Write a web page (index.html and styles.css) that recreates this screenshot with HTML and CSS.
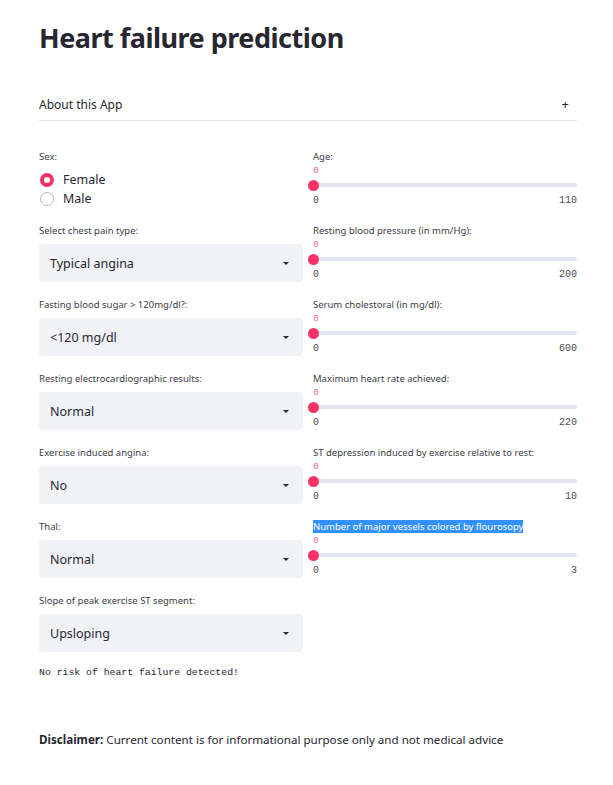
FILE: index.html
```html
<!DOCTYPE html>
<html>
<head>
<meta charset="utf-8">
<link rel="stylesheet" href="styles.css">
</head>
<body>
<div class="main">
  <h1 class="title">Heart failure prediction</h1>
  <div class="expander">
    <span class="exp-label">About this App</span>
    <span class="exp-plus">+</span>
  </div>
  <div class="columns">
    <div class="col">
      <div class="block radio-block">
        <div class="label">Sex:</div>
        <div class="radio-row"><span class="radio on"></span><span class="radio-text">Female</span></div>
        <div class="radio-row"><span class="radio"></span><span class="radio-text">Male</span></div>
      </div>
      <div class="block">
        <div class="label">Select chest pain type:</div>
        <div class="select"><span>Typical angina</span><span class="caret"></span></div>
      </div>
      <div class="block">
        <div class="label">Fasting blood sugar &gt; 120mg/dl?:</div>
        <div class="select"><span>&lt;120 mg/dl</span><span class="caret"></span></div>
      </div>
      <div class="block">
        <div class="label">Resting electrocardiographic results:</div>
        <div class="select"><span>Normal</span><span class="caret"></span></div>
      </div>
      <div class="block">
        <div class="label">Exercise induced angina:</div>
        <div class="select"><span>No</span><span class="caret"></span></div>
      </div>
      <div class="block">
        <div class="label">Thal:</div>
        <div class="select"><span>Normal</span><span class="caret"></span></div>
      </div>
      <div class="block">
        <div class="label">Slope of peak exercise ST segment:</div>
        <div class="select"><span>Upsloping</span><span class="caret"></span></div>
      </div>
    </div>
    <div class="col">
      <div class="slider-block">
        <div class="label">Age:</div>
        <div class="value">0</div>
        <div class="track-area"><div class="track"></div><span class="thumb"></span></div>
        <div class="ticks"><span>0</span><span>110</span></div>
      </div>
      <div class="slider-block">
        <div class="label">Resting blood pressure (in mm/Hg):</div>
        <div class="value">0</div>
        <div class="track-area"><div class="track"></div><span class="thumb"></span></div>
        <div class="ticks"><span>0</span><span>200</span></div>
      </div>
      <div class="slider-block">
        <div class="label">Serum cholestoral (in mg/dl):</div>
        <div class="value">0</div>
        <div class="track-area"><div class="track"></div><span class="thumb"></span></div>
        <div class="ticks"><span>0</span><span>600</span></div>
      </div>
      <div class="slider-block">
        <div class="label">Maximum heart rate achieved:</div>
        <div class="value">0</div>
        <div class="track-area"><div class="track"></div><span class="thumb"></span></div>
        <div class="ticks"><span>0</span><span>220</span></div>
      </div>
      <div class="slider-block">
        <div class="label">ST depression induced by exercise relative to rest:</div>
        <div class="value">0</div>
        <div class="track-area"><div class="track"></div><span class="thumb"></span></div>
        <div class="ticks"><span>0</span><span>10</span></div>
      </div>
      <div class="slider-block">
        <div class="label"><span class="selected">Number of major vessels colored by flourosopy</span></div>
        <div class="value">0</div>
        <div class="track-area"><div class="track"></div><span class="thumb"></span></div>
        <div class="ticks"><span>0</span><span>3</span></div>
      </div>
    </div>
  </div>
  <div class="result">No risk of heart failure detected!</div>
  <div class="disclaimer"><b>Disclaimer:</b> Current content is for informational purpose only and not medical advice</div>
</div>
</body>
</html>
```
FILE: styles.css
```css
html, body {
  margin: 0;
  padding: 0;
  background: #ffffff;
}
body {
  font-family: "Noto Sans", "Open Sans", sans-serif;
  color: #262730;
}
.main {
  width: 538px;
  padding: 20px 0 0 39px;
}
.title {
  margin: 0;
  font-size: 27px;
  letter-spacing: -0.5px;
  line-height: 36px;
  font-weight: 700;
  color: #262730;
}
.expander {
  margin-top: 32px;
  height: 32px;
  border-bottom: 1px solid #e6e6e6;
  display: flex;
  align-items: center;
  justify-content: space-between;
  font-size: 12px;
}
.exp-plus {
  font-size: 13px;
  margin-right: 8px;
}
.columns {
  margin-top: 29px;
  display: flex;
  gap: 10px;
}
.col {
  width: 264px;
  display: flex;
  flex-direction: column;
}
.label {
  font-size: 9.5px;
  line-height: 14px;
  height: 14px;
  color: #3b3c45;
  white-space: nowrap;
}
.radio-block {
  margin-bottom: 16px;
}
.radio-block .label {
  margin-bottom: 6px;
}
.radio-row {
  height: 19px;
  display: flex;
  align-items: center;
}
.radio {
  box-sizing: border-box;
  width: 14px;
  height: 14px;
  border-radius: 50%;
  border: 1.5px solid #b9b9bd;
  margin-left: 1px;
  margin-right: 9px;
  background: #fff;
}
.radio.on {
  border: 4.5px solid #f63366;
  background: #fff;
}
.radio-text {
  font-size: 12.5px;
}
.block {
  margin-bottom: 16px;
}
.block:last-child {
  margin-bottom: 0;
}
.block .label {
  margin-bottom: 6px;
}
.select {
  height: 38px;
  box-sizing: border-box;
  background: #f0f2f6;
  border-radius: 4px;
  display: flex;
  align-items: center;
  justify-content: space-between;
  padding: 0 14px 0 11px;
  font-size: 12.5px;
}
.caret {
  width: 0;
  height: 0;
  border-left: 3px solid transparent;
  border-right: 3px solid transparent;
  border-top: 3px solid #262730;
}
.slider-block {
  height: 74px;
}
.value {
  font-family: "Liberation Mono", "DejaVu Sans Mono", monospace;
  font-size: 9.5px;
  line-height: 14px;
  height: 14px;
  color: #f63366;
  opacity: 0.75;
}
.track-area {
  position: relative;
  height: 14px;
  display: flex;
  align-items: center;
}
.track {
  width: 100%;
  height: 4px;
  background: #e1e4ec;
  border-radius: 2px;
}
.thumb {
  position: absolute;
  left: -5.5px;
  top: 1.5px;
  width: 11px;
  height: 11px;
  border-radius: 50%;
  background: #f63366;
}
.ticks {
  margin-top: 2px;
  display: flex;
  justify-content: space-between;
  font-family: "Liberation Mono", "DejaVu Sans Mono", monospace;
  font-size: 10px;
  line-height: 14px;
  color: #4a4b55;
}
.selected {
  background: #3390ff;
  color: #ffffff;
}
.result {
  margin-top: 14px;
  font-family: "Liberation Mono", "DejaVu Sans Mono", monospace;
  font-size: 9.8px;
  line-height: 14px;
  color: #262730;
}
.disclaimer {
  margin-top: 52px;
  font-size: 11.6px;
  line-height: 16px;
  color: #262730;
}
```
